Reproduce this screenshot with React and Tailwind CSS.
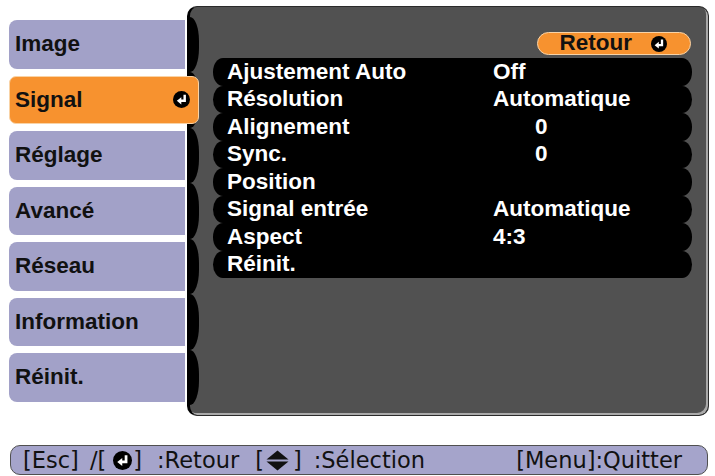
import React from "react";

const EnterIcon = ({ size = 16 }) => (
  <svg width={size} height={size} viewBox="0 0 16 16" className="shrink-0">
    <circle cx="8" cy="8" r="8" fill="#000" />
    <path d="M11 3.6 V9.2 H7" stroke="#fff" strokeWidth="2.3" fill="none" />
    <path d="M7.8 5.8 L3.6 9.2 L7.8 12.6 Z" fill="#fff" />
  </svg>
);

const UpDownIcon = () => (
  <svg width="23" height="21" viewBox="0 0 23 21" className="shrink-0">
    <path d="M11.5 0.5 L22.5 9.6 H0.5 Z" fill="#111" />
    <path d="M0.5 11.4 H22.5 L11.5 20.5 Z" fill="#111" />
  </svg>
);

const menu = [
  { label: "Image" },
  { label: "Signal", selected: true },
  { label: "Réglage" },
  { label: "Avancé" },
  { label: "Réseau" },
  { label: "Information" },
  { label: "Réinit." },
];

const rows = [
  { label: "Ajustement Auto", value: "Off" },
  { label: "Résolution", value: "Automatique" },
  { label: "Alignement", value: "0", indent: true },
  { label: "Sync.", value: "0", indent: true },
  { label: "Position", value: "" },
  { label: "Signal entrée", value: "Automatique" },
  { label: "Aspect", value: "4:3" },
  { label: "Réinit.", value: "" },
];

export default function App() {
  return (
    <div className="w-[715px] h-[476px] bg-white overflow-hidden font-['Liberation_Sans',Arial,sans-serif] font-bold text-[22.5px]">
      <div className="flex items-start pt-[6px] pl-[9px] h-[416px]">
        {/* Left menu */}
        <div className="flex flex-col gap-[7px] pt-[14px] w-[176px] shrink-0 relative z-10">
          {menu.map((m) =>
            m.selected ? (
              <div
                key={m.label}
                className="h-[48.5px] w-[190px] shrink-0 bg-[#f7922f] border border-[#f9d3a6] rounded-[7px] flex items-center justify-between pl-[5px] pr-[8px] text-[#111]"
              >
                <span>{m.label}</span>
                <EnterIcon size={17} />
              </div>
            ) : (
              <div
                key={m.label}
                className="h-[48.5px] bg-[#a2a1c8] rounded-l-[8px] flex items-center pl-[6px] text-[#111]"
              >
                {m.label}
              </div>
            )
          )}
        </div>

        {/* Main panel */}
        <div className="ml-[2px] w-[522px] h-[410px] shrink-0 bg-[#515151] rounded-[10px] border border-[#2a2a2a] border-l-[3px] border-l-black shadow-[inset_-2px_-2px_0_#a9a9a9] flex">
          <div className="flex flex-col pt-[9.5px] w-[9px] shrink-0">
            {menu.map((m) => (
              <div
                key={m.label}
                className="h-[55.5px] w-[9px] bg-black rounded-r-[9px_24px]"
              />
            ))}
          </div>
          <div className="flex-1 flex flex-col pt-[25px] pl-[14px] pr-[16px]">
            <div className="self-end mr-[1px] h-[23px] w-[154px] bg-[#f7922f] border border-[#f9d3a6] rounded-[12px] flex items-center justify-end gap-[19px] pr-[23px] text-[#111] leading-none">
              <span>Retour</span>
              <EnterIcon size={16} />
            </div>
            <div className="mt-[3px] flex flex-col">
              {rows.map((r) => (
                <div
                  key={r.label}
                  className="h-[27.5px] bg-black rounded-[10px/50%] flex items-center pl-[14px] text-white leading-none"
                >
                  <span className="w-[266px] shrink-0">{r.label}</span>
                  <span className={r.indent ? "pl-[42px]" : ""}>{r.value}</span>
                </div>
              ))}
            </div>
          </div>
        </div>
      </div>

      {/* Bottom bar */}
      <div className="mt-[29px] ml-[10px] w-[698px] h-[30px] bg-[#a5a4cb] border border-[#505050] rounded-[10px] flex items-center pl-[12px] pr-[25px] font-['DejaVu_Sans',sans-serif] font-normal text-[22.5px] text-[#111] leading-none whitespace-pre">
        <span>[Esc]</span>
        <span className="ml-[11px]">/[</span>
        <span className="ml-[7px] flex"><EnterIcon size={19} /></span>
        <span className="ml-[1px]">]</span>
        <span className="ml-[15px]">:Retour</span>
        <span className="ml-[16px]">[</span>
        <span className="ml-[2px] flex"><UpDownIcon /></span>
        <span className="ml-[4px]">]</span>
        <span className="ml-[12px]">:Sélection</span>
        <span className="flex-1" />
        <span>[Menu]:Quitter</span>
      </div>
    </div>
  );
}
